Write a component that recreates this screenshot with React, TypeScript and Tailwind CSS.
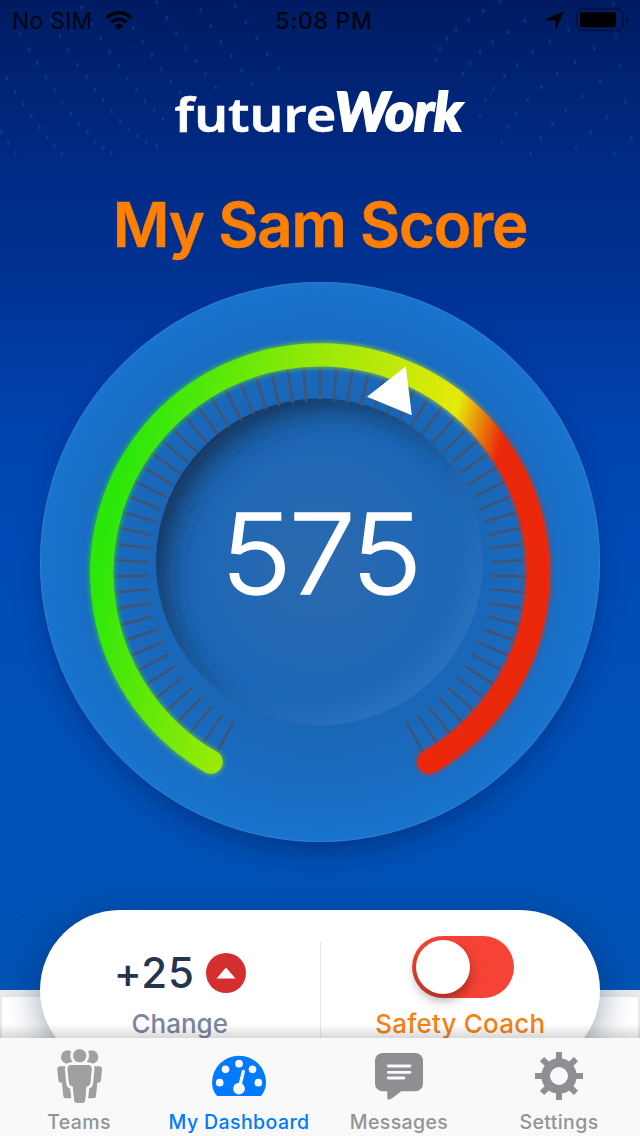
import type { ReactNode } from "react";
import clsx from "clsx";

const SCORE = 575;
const TICKS = Array.from({ length: 67 }, (_, i) => -150 + i * (300 / 66));

// faint dotted waves in the backdrop, x/y pairs, one row per wave
const DOTS = [
  [20, 235, 45, 275, 69, 313, 94, 349, 118, 382, 140, 412, 163, 440, 186, 463],
  [60, 103, 86, 148, 112, 190, 138, 232, 164, 272, 187, 308, 213, 340, 237, 370, 262, 398, 286, 424, 310, 442, 335, 458],
  [155, 60, 180, 107, 205, 150, 232, 193, 259, 232, 284, 270, 309, 302, 335, 335, 361, 364, 387, 388, 412, 408, 438, 425, 470, 440],
  [245, 22, 275, 72, 302, 115, 329, 157, 356, 197, 382, 237, 409, 271, 435, 304, 462, 332, 489, 358],
  [375, 45, 400, 84, 427, 126, 456, 167, 484, 208, 512, 245, 540, 278],
  [470, 8, 500, 55, 529, 100, 558, 144, 588, 184, 617, 224, 646, 262],
  [602, 32, 632, 79, 662, 126, 694, 168, 725, 211, 757, 250],
  [706, 17, 738, 66, 771, 115, 802, 162, 835, 206],
  [2, 395, 25, 427, 47, 457],
  [1500, 5, 1450, 33, 1406, 60, 1368, 88, 1340, 115, 1320, 145, 1307, 178],
  [1575, 63, 1523, 97, 1478, 128, 1440, 158, 1410, 190, 1388, 222],
  [1705, 88, 1650, 125, 1598, 158, 1552, 195, 1513, 230, 1480, 265, 1456, 302, 1440, 345],
  [1840, 10, 1848, 105, 1783, 145, 1725, 185, 1672, 223, 1624, 262, 1583, 300, 1550, 340, 1525, 380, 1506, 426],
  [1860, 200, 1800, 245, 1746, 288, 1697, 330, 1657, 373, 1622, 415, 1592, 460],
  [1876, 305, 1820, 352, 1771, 398, 1728, 442],
  [1895, 415, 1843, 463],
  [55, 2748, 134, 2740, 208, 2734, 40, 2832, 125, 2820, 27, 2912],
  [1770, 2706, 1808, 2700, 1755, 2786, 1793, 2832, 1880, 2780, 1898, 2865, 1870, 2944],
];

function Backdrop() {
  return (
    <svg className="absolute inset-0" width="640" height="990" viewBox="0 0 1920 2970" fill="#0f62a8" fillOpacity="0.36">
      {DOTS.map((row, r) =>
        row.map((x, i) =>
          i % 2 === 0 ? <ellipse key={`${r}-${i}`} cx={x} cy={row[i + 1]} rx="4" ry="7" /> : null
        )
      )}
    </svg>
  );
}

function StatusBar() {
  return (
    <div className="grid h-[42px] grid-cols-3 items-center pr-2.5 pl-3 text-[23px] text-black/85">
      <div className="flex items-center gap-3">
        <span className="tracking-[0.2px]">No SIM</span>
        <svg className="-mt-0.5" width="28" height="21" viewBox="0 0 30 22" fill="none" stroke="currentColor">
          <path d="M2 8.2a18.5 18.5 0 0 1 26 0" strokeWidth="4" />
          <path d="M6.8 13a11.7 11.7 0 0 1 16.4 0" strokeWidth="3.6" />
          <path d="M10.3 16.5a6.8 6.8 0 0 1 9.4 0L15 21.2z" fill="currentColor" stroke="none" />
        </svg>
      </div>
      <span className="pl-1.5 text-center font-medium tracking-[0.7px] whitespace-nowrap">5:08 PM</span>
      <div className="-mt-0.5 flex items-center justify-end gap-3">
        <svg width="19" height="19" viewBox="0 0 19 19" fill="currentColor">
          <path d="M18.3.3Q19 0 18.6.9L11.8 17.8Q11 19 10.2 17.8L9.9 9.6 1 9.4Q-.2 9 .8 8.1z" />
        </svg>
        <svg width="54" height="24" viewBox="0 0 54 24">
          <rect x="1" y="1" width="46" height="21.5" rx="6" fill="none" stroke="#000" strokeOpacity=".4" strokeWidth="1.6" />
          <rect x="4" y="4.2" width="36" height="15" rx="2" fill="#000" />
          <path d="M50 8.5c3.4 1 3.4 6 0 7z" fill="#000" fillOpacity=".4" />
        </svg>
      </div>
    </div>
  );
}

function Logo() {
  return (
    <svg className="mx-auto mt-[22px] block overflow-visible" width="320" height="94" viewBox="160 64 320 94" fill="#fff" stroke="#fff">
      <text x="174.5" y="131.5" strokeWidth="0.5" fontFamily="Noto Sans" fontWeight="600" fontSize="46" textLength="162" lengthAdjust="spacingAndGlyphs">
        future
      </text>
      <text x="335" y="131" strokeWidth="2.2" fontFamily="Lato" fontWeight="900" fontStyle="italic" fontSize="53.5" textLength="127" lengthAdjust="spacingAndGlyphs">
        Work
      </text>
    </svg>
  );
}

function Gauge() {
  const arc = "M210.9 762a218.2 218.2 0 1 1 218.2 0";
  return (
    <svg className="block overflow-visible" width="560" height="560" viewBox="40 282 560 560">
      <defs>
        <linearGradient id="scale" gradientUnits="userSpaceOnUse" x1="97.6" y1="515.5" x2="542.4" y2="630.5">
          <stop offset="0.03" stopColor="#2be80a" />
          <stop offset="0.38" stopColor="#98e906" />
          <stop offset="0.7" stopColor="#e6e90a" />
          <stop offset="0.81" stopColor="#eb280a" />
        </linearGradient>
        <radialGradient id="face">
          <stop offset="0.58" stopColor="#1a66b6" />
          <stop offset="0.78" stopColor="#196bc0" />
          <stop offset="1" stopColor="#1974cd" />
        </radialGradient>
        <radialGradient id="well">
          <stop offset="0" stopColor="#2b6aae" />
          <stop offset="1" stopColor="#1a66b8" />
        </radialGradient>
        <clipPath id="wellClip">
          <circle cx="319.5" cy="562" r="163.5" />
        </clipPath>
        <filter id="blur" filterUnits="userSpaceOnUse" x="0" y="200" width="640" height="760">
          <feGaussianBlur stdDeviation="15" />
        </filter>
        <filter id="glow" filterUnits="userSpaceOnUse" x="40" y="282" width="560" height="560">
          <feGaussianBlur stdDeviation="2.6" />
        </filter>
      </defs>

      <circle cx="320" cy="576" r="276" fill="#001c60" opacity="0.5" filter="url(#blur)" />
      <circle cx="320" cy="562" r="280" fill="url(#face)" />
      <circle cx="320" cy="562" r="279.5" fill="none" stroke="#3d86d2" strokeOpacity="0.6" />

      <g clipPath="url(#wellClip)">
        <circle cx="319.5" cy="562" r="164" fill="url(#well)" />
        <circle cx="335" cy="578" r="206" fill="none" stroke="#162c44" strokeWidth="70" opacity="0.85" filter="url(#blur)" />
        <circle cx="304" cy="546" r="205" fill="none" stroke="#4a86cc" strokeWidth="60" opacity="0.5" filter="url(#blur)" />
      </g>

      <g stroke="#43536f" strokeWidth="2.4">
        {TICKS.map((deg) => (
          <path key={deg} d="M320 367v34" transform={`rotate(${deg} 320 573)`} />
        ))}
      </g>

      <g fill="none" stroke="url(#scale)" strokeLinecap="round">
        <path d={arc} strokeWidth="25" filter="url(#glow)" opacity="0.7" />
        <path d={arc} strokeWidth="23.4" />
      </g>
      <path d="M405.8 366.5 367 396.8l44.8 18.4z" fill="#fff" />
    </svg>
  );
}

function Stat({ label, orange, children }: { label: string; orange?: boolean; children: ReactNode }) {
  return (
    <div className="flex w-[280px] flex-col items-center pt-6">
      <div className="flex h-[68px] items-center">{children}</div>
      <span
        className={clsx(
          "mt-1.5 text-[26px] leading-8 font-medium whitespace-nowrap",
          orange ? "tracking-[0.2px] text-[#f58214]" : "text-[#7c869f]"
        )}
      >
        {label}
      </span>
    </div>
  );
}

function Tab({ label, active, children }: { label: string; active?: boolean; children: ReactNode }) {
  return (
    <div
      className={clsx(
        "flex w-40 flex-col items-center pt-2.5 pr-0.5",
        active ? "text-[#007aff]" : "text-[#939397]"
      )}
    >
      <div className="flex h-14 items-center">{children}</div>
      <span className="mt-1.5 text-[19.5px] leading-6 font-medium tracking-[0.4px] whitespace-nowrap">{label}</span>
    </div>
  );
}

export default function App() {
  return (
    <div className="flex h-[1136px] w-[640px] flex-col overflow-hidden bg-white font-[Inter,sans-serif]">
      <main className="relative h-[1038px] overflow-hidden bg-[#e7e9ed]">
        <section className="relative h-[990px] bg-linear-[180deg,#001b62_0%,#002880_14%,#003190_26%,#0040a9_40%,#004ab6_52%,#0052b9_75%,#0052b4_100%]">
          <Backdrop />
          <div className="relative">
            <StatusBar />
            <Logo />
            <h1 className="mt-[29px] h-[95px] text-center text-[61.5px] leading-[76px] font-semibold tracking-[-1.1px] text-[#ff7f00] [-webkit-text-stroke:0.6px_#ff7f00]">
              My Sam Score
            </h1>
            <div className="relative mx-auto w-[560px]">
              <Gauge />
              <div className="absolute inset-0 flex scale-x-[1.07] items-center justify-center pb-[19px] text-[112px] font-light tracking-[-3px] text-white [-webkit-text-stroke:1.4px_#fff]">
                {SCORE}
              </div>
            </div>
          </div>
        </section>

        <div className="mx-0.5 mt-[7px] h-20 bg-white" />

        <div className="absolute top-[910px] left-10 flex h-40 w-[560px] rounded-[80px] bg-white shadow-[0_8px_36px_rgba(10,30,70,0.4)]">
          <Stat label="Change">
            <span className="mt-2 text-[42px] font-medium tracking-[0.8px] text-[#24364e]">+25</span>
            <svg className="mt-2.5 ml-[11px]" width="40" height="40" viewBox="0 0 40 40">
              <circle cx="20" cy="20" r="20" fill="#d32f2f" />
              <path d="m20 14.5 9.5 11h-19z" fill="#fff" />
            </svg>
          </Stat>
          <div className="mt-8 w-px bg-[#e6e8ec]" />
          <Stat label="Safety Coach" orange>
            <button
              role="switch"
              aria-checked="false"
              className="mb-0.5 ml-1.5 h-[62px] w-[102px] rounded-full bg-[#f64336] p-1"
            >
              <span className="block size-[54px] rounded-full bg-white shadow-[0_6px_12px_rgba(0,0,0,0.35)]" />
            </button>
          </Stat>
        </div>

        <div className="absolute inset-x-0 bottom-0 h-3.5 bg-linear-to-b from-black/0 to-black/15" />
      </main>

      <nav className="flex h-[98px] bg-[#f9f9f9]">
        <Tab label="Teams">
          <svg className="ml-px" width="48" height="56" viewBox="168 474 144 168" fill="#a0a0a0">
            <circle cx="203" cy="501" r="20" />
            <circle cx="275" cy="501" r="20" />
            <path d="M181 529h30v60l3 36h-17q-6 0-7-6l-4-41h-4q-6 0-7-7l-3-34q0-8 9-8z" />
            <path d="M297 529h-30v60l-3 36h17q6 0 7-6l4-41h4q6 0 7-7l3-34q0-8-9-8z" />
            <g stroke="#f9f9f9" strokeWidth="17" strokeLinejoin="round" paintOrder="stroke">
              <path d="M215 525h48q12 0 12 12l-4 41q-1 9-8 10l-4 2-4 42q-1 6-7 6h-18q-6 0-7-6l-4-42-4-2q-7-1-8-10l-4-41q0-12 12-12z" />
              <circle cx="239" cy="497" r="20" />
            </g>
            <path d="M215 525h48q12 0 12 12l-4 41q-1 9-8 10l-4 2-4 42q-1 6-7 6h-18q-6 0-7-6l-4-42-4-2q-7-1-8-10l-4-41q0-12 12-12z" />
          </svg>
        </Tab>
        <Tab label="My Dashboard" active>
          <svg width="54.4" height="42" viewBox="636 495 163 126">
            <path d="M651 618q-15-18-15-40a81 81 0 0 1 162 0q0 22-15 40z" fill="#007aff" />
            <g fill="#f9f9f9">
              <circle cx="659" cy="578" r="11.5" />
              <circle cx="676.5" cy="538" r="11.5" />
              <circle cx="717" cy="521" r="11.5" />
              <circle cx="757.5" cy="538" r="11.5" />
              <circle cx="775" cy="578" r="11.5" />
              <circle cx="717" cy="596" r="17.5" />
            </g>
            <path d="m719 590 11-46" stroke="#f9f9f9" strokeWidth="10" strokeLinecap="round" />
          </svg>
        </Tab>
        <Tab label="Messages">
          <svg width="48" height="47" viewBox="165 487 144 141" fill="#8e8e93">
            <rect x="165" y="487" width="144" height="115" rx="23" />
            <path d="M202 598v25q0 6 7 3 10-4 36-26z" />
            <path d="M205 526h65M205 545h65M205 562h47" stroke="#f9f9f9" strokeWidth="8.5" strokeLinecap="round" />
          </svg>
        </Tab>
        <Tab label="Settings">
          <svg width="48" height="48" viewBox="-72 -72 144 144" fill="none" stroke="#8e8e93">
            <circle r="40" strokeWidth="26" />
            {[0, 45, 90, 135].map((deg) => (
              <path key={deg} d="M0-72v24M0 72v-24" strokeWidth="18" transform={`rotate(${deg})`} />
            ))}
          </svg>
        </Tab>
      </nav>
    </div>
  );
}
